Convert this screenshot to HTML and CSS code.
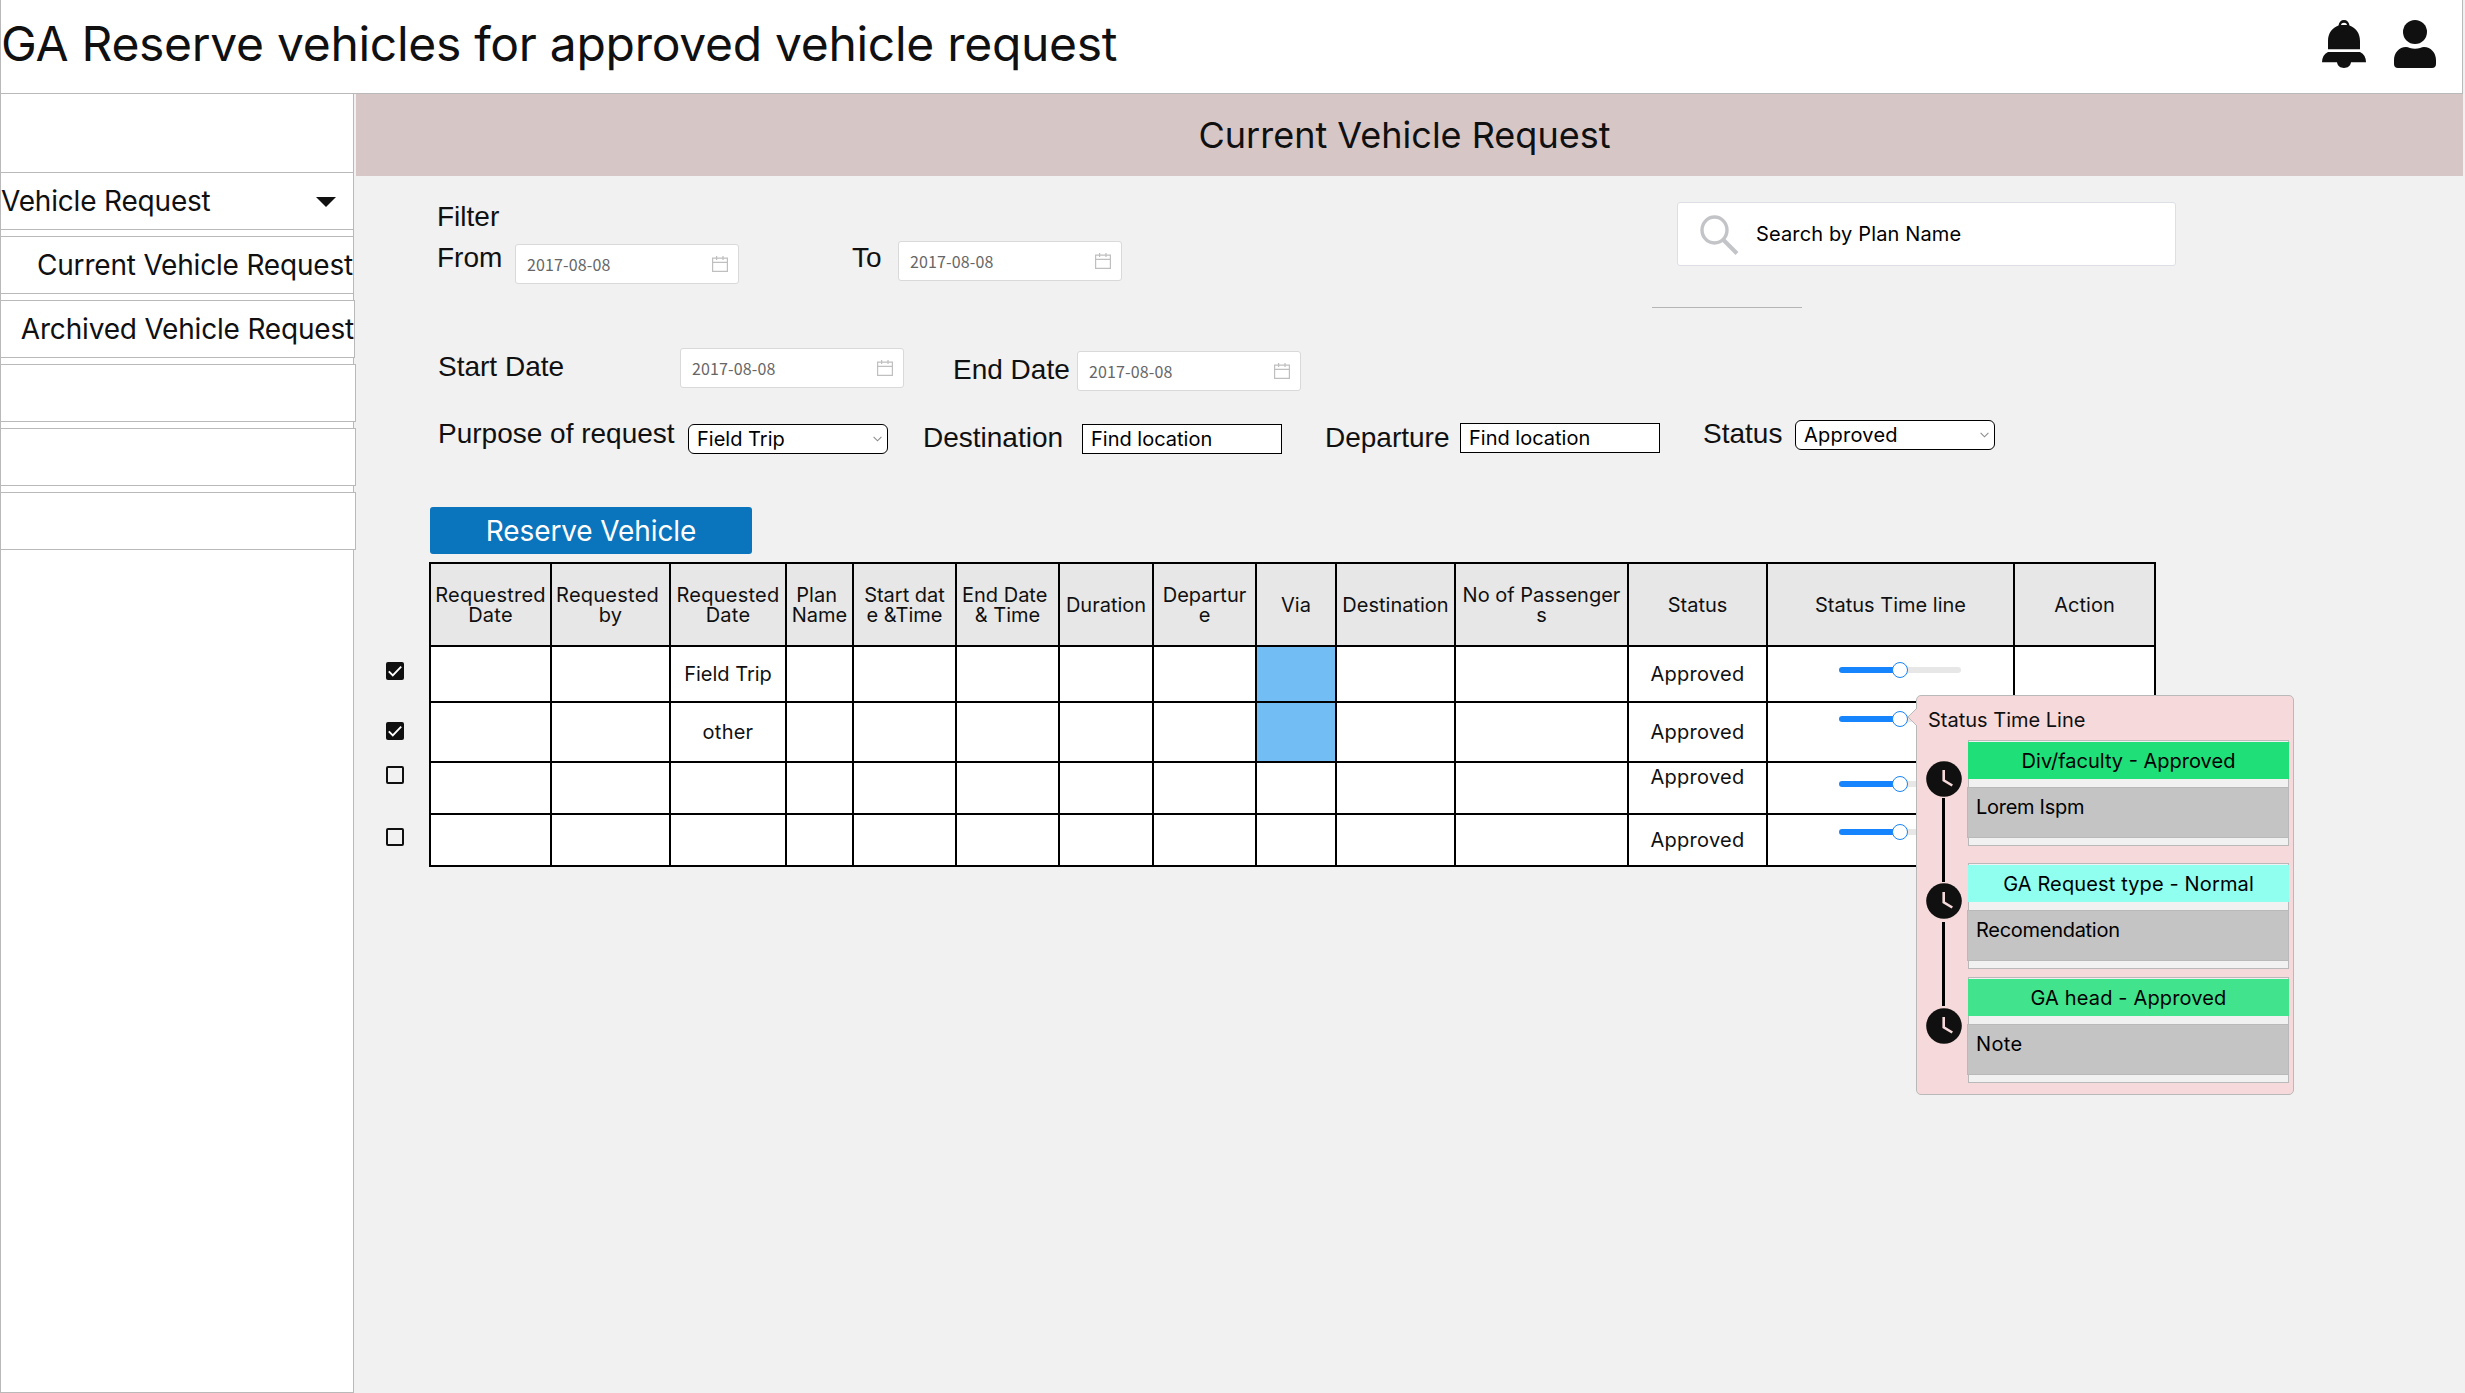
FILE: index.html
```html
<!DOCTYPE html>
<html lang="en">
<head>
<meta charset="utf-8">
<title>GA Reserve vehicles</title>
<link rel="stylesheet" href="styles.css">
</head>
<body>
<svg class="defs" width="0" height="0" aria-hidden="true">
  <symbol id="calendar" viewBox="0 0 16 16"><path d="M.6 2.2h14.8v13.2H.6zM.6 6.3h14.8M4.6 0v4M11 0v4" fill="none" stroke="#bfbfbf" stroke-width="1.2"/></symbol>
  <symbol id="chevron" viewBox="0 0 9 6"><path d="M.6.8l3.9 4 3.9-4" fill="none" stroke="#8c8c8c" stroke-width="1.1"/></symbol>
  <symbol id="clock" viewBox="0 0 36 36"><circle cx="18" cy="18" r="17.8" fill="#101010"/><path d="M17.7 9v10.3l8.6 5.2" fill="none" stroke="#f6d9da" stroke-width="2.6"/></symbol>
  <symbol id="box-on" viewBox="0 0 18 18"><rect width="18" height="18" rx="2" fill="#101010"/><path d="M2.8 9.3l4 4L15.2 4.7" fill="none" stroke="#fff" stroke-width="1.9"/></symbol>
  <symbol id="box-off" viewBox="0 0 18 18"><rect x="1" y="1" width="16" height="16" rx="1" fill="none" stroke="#101010" stroke-width="2"/></symbol>
</svg>

<header class="topbar">
  <h1 class="topbar-title">GA Reserve vehicles for approved vehicle request</h1>
  <svg class="bell" width="44" height="48" viewBox="0 0 44 48" fill="#101010"><path fill-rule="evenodd" d="M6 29.300V21C6 13 10.500 7.500 16.500 5.500C17 2 19 0 22 0s5 2 5.500 5.500C33.500 7.500 38 13 38 21v8.300zM19 5h6c-.3-1.500-1.400-2.300-3-2.300S19.300 3.500 19 5z"/><path d="M6 32h32c4 2 6 5.500 6 10.300H29C28.500 46 25.500 48 22 48s-6.500-2-7-5.700H0C0 37.500 2 34 6 32z"/></svg>
  <svg width="42" height="48" viewBox="0 0 42 48" fill="#101010"><circle cx="21" cy="12" r="12"/><path d="M12 27c2.500 0 5 1.800 9 1.800S27.500 27 30 27c7 0 12 6 12 13v4c0 2.500-1.500 4-4 4H4c-2.500 0-4-1.500-4-4v-4c0-7 5-13 12-13z"/></svg>
</header>

<div class="shell">
  <nav class="sidebar">
    <div class="nav-item nav-group">Vehicle Request<svg width="20" height="10" viewBox="0 0 20 10"><path d="M0 0h20L10 10z" fill="#101010"/></svg></div>
    <div class="nav-item nav-current">Current Vehicle Request</div>
    <div class="nav-item nav-archived">Archived Vehicle Request</div>
    <div class="nav-item nav-empty"></div>
    <div class="nav-item nav-empty"></div>
    <div class="nav-item nav-empty"></div>
  </nav>

  <main class="main">
    <h2 class="banner">Current Vehicle Request</h2>

    <section class="filters">
      <div class="filters-top">
        <div class="range">
          <div class="label label-filter">Filter</div>
          <div class="row row-range">
            <span class="label label-from">From</span>
            <span class="date date-from">2017-08-08<svg width="16" height="16"><use href="#calendar"/></svg></span>
            <span class="label label-to">To</span>
            <span class="date">2017-08-08<svg width="16" height="16"><use href="#calendar"/></svg></span>
          </div>
        </div>
        <div class="search-side">
          <div class="search">
            <svg width="39" height="40" viewBox="0 0 39 40" fill="none" stroke="#c3c4c8"><ellipse cx="14.500" cy="15" rx="12.500" ry="13" stroke-width="3.400"/><path d="M23.500 25L37 38.500" stroke-width="4"/></svg>
            Search by Plan Name
          </div>
          <div class="rule"></div>
        </div>
      </div>
      <div class="row row-dates">
        <span class="label label-start">Start Date</span>
        <span class="date">2017-08-08<svg width="16" height="16"><use href="#calendar"/></svg></span>
        <span class="label label-end">End Date</span>
        <span class="date date-end">2017-08-08<svg width="16" height="16"><use href="#calendar"/></svg></span>
      </div>
      <div class="row row-fields">
        <span class="label label-purpose">Purpose of request</span>
        <span class="field select field-purpose">Field Trip<svg width="9" height="6"><use href="#chevron"/></svg></span>
        <span class="label label-destination">Destination</span>
        <span class="field field-destination">Find location</span>
        <span class="label label-departure">Departure</span>
        <span class="field field-departure">Find location</span>
        <span class="label label-status">Status</span>
        <span class="field select field-status">Approved<svg width="9" height="6"><use href="#chevron"/></svg></span>
      </div>
    </section>

    <div class="reserve">Reserve Vehicle</div>

    <section class="requests">
      <div class="checks">
        <svg width="18" height="18"><use href="#box-on"/></svg>
        <svg class="check-2" width="18" height="18"><use href="#box-on"/></svg>
        <svg class="check-3" width="18" height="18"><use href="#box-off"/></svg>
        <svg class="check-4" width="18" height="18"><use href="#box-off"/></svg>
      </div>
      <table class="grid">
        <colgroup><col class="c1"><col class="c2"><col class="c3"><col class="c4"><col class="c5"><col class="c6"><col class="c7"><col class="c8"><col class="c9"><col class="c10"><col class="c11"><col class="c12"><col class="c13"><col class="c14"></colgroup>
        <thead>
          <tr><th class="wide">Requestred<br>Date</th><th class="wide">Requested&nbsp;<br>by</th><th class="wide">Requested<br>Date</th><th>Plan&nbsp;<br>Name</th><th>Start dat<br>e &amp;Time</th><th>End Date&nbsp;<br>&amp; Time</th><th>Duration</th><th>Departur<br>e</th><th>Via</th><th>Destination</th><th>No of Passenger<br>s</th><th>Status</th><th>Status Time line</th><th>Action</th></tr>
        </thead>
        <tbody>
          <tr class="r1"><td></td><td></td><td>Field Trip</td><td></td><td></td><td></td><td></td><td></td><td class="via"></td><td></td><td></td><td class="wide">Approved</td><td class="timeline"><div class="slider"><i></i></div></td><td></td></tr>
          <tr class="r2"><td></td><td></td><td class="wide">other</td><td></td><td></td><td></td><td></td><td></td><td class="via"></td><td></td><td></td><td class="wide">Approved</td><td class="timeline"><div class="slider"><i></i></div></td><td></td></tr>
          <tr class="r3"><td></td><td></td><td></td><td></td><td></td><td></td><td></td><td></td><td></td><td></td><td></td><td class="wide">Approved</td><td class="timeline"><div class="slider"><i></i></div></td><td></td></tr>
          <tr class="r4"><td></td><td></td><td></td><td></td><td></td><td></td><td></td><td></td><td></td><td></td><td></td><td class="wide">Approved</td><td class="timeline"><div class="slider"><i></i></div></td><td></td></tr>
        </tbody>
      </table>
    </section>
  </main>
</div>

<aside class="popover">
  <svg class="pointer" width="10" height="18" viewBox="0 0 10 18"><path d="M10 0L1 9l9 9" fill="#f6d9da" stroke="#b9b9b9"/></svg>
  <div class="popover-title">Status Time Line</div>
  <div class="popover-body">
    <div class="track">
      <svg width="36" height="36"><use href="#clock"/></svg>
      <span class="link"></span>
      <svg class="clock-2" width="36" height="36"><use href="#clock"/></svg>
      <span class="link link-2"></span>
      <svg class="clock-3" width="36" height="36"><use href="#clock"/></svg>
    </div>
    <div class="cards">
      <div class="card"><div class="card-head green">Div/faculty - Approved</div><div class="card-note tight">Lorem Ispm</div></div>
      <div class="card card-2"><div class="card-head aqua">GA Request type - Normal</div><div class="card-note tight">Recomendation</div></div>
      <div class="card card-3"><div class="card-head mint">GA head - Approved</div><div class="card-note loose">Note</div></div>
    </div>
  </div>
</aside>
</body>
</html>
```
FILE: styles.css
```css
* { box-sizing: border-box; }

body {
  margin: 0;
  width: 2465px;
  height: 1393px;
  overflow: hidden;
  background: #f1f1f1;
  color: #101010;
  font: 20px/20px Inter, sans-serif;
}

svg { display: block; flex: none; }
.defs { position: absolute; }

/* Top bar */
.topbar {
  display: flex;
  width: 2463px;
  height: 94px;
  padding: 20px 26px 0 0;
  background: #fff;
  border: solid #b9b9b9;
  border-width: 0 1px 1px;
}
.topbar-title {
  flex: 1;
  margin: 0;
  font-size: 48px;
  font-weight: 400;
  line-height: 47px;
  letter-spacing: -.29px;
}
.bell { margin-right: 28px; }

/* Layout */
.shell { display: flex; height: 1299px; }

.sidebar {
  width: 354px;
  flex: none;
  display: flex;
  flex-direction: column;
  gap: 6px;
  padding-top: 78px;
  background: #fff;
  border: solid #b9b9b9;
  border-width: 0 1px 1px;
}
.nav-item {
  flex: none;
  width: 354px;
  height: 58px;
  margin-left: -1px;
  display: flex;
  align-items: center;
  background: #fff;
  border: 1px solid #b9b9b9;
  font-size: 28px;
  letter-spacing: -.19px;
  white-space: nowrap;
}
.nav-group { justify-content: space-between; padding-right: 17px; }
.nav-group svg { margin-top: 2px; }
.nav-current { justify-content: flex-end; }
.nav-archived { width: 355px; justify-content: flex-end; }
.nav-empty { width: 356px; }

.main { flex: none; width: 2109px; }

.banner {
  display: flex;
  align-items: center;
  justify-content: center;
  height: 82px;
  margin: 0 0 0 2px;
  padding-right: 10px;
  background: #d6c6c6;
  font-size: 36px;
  font-weight: 400;
}

/* Filters */
.filters { height: 331px; padding: 24px 0 0 82px; }
.filters-top { display: flex; height: 148px; }
.range { width: 1216px; }
.row { display: flex; align-items: flex-start; }
.label {
  flex: none;
  font: 28px/34px "Liberation Sans", Arial, sans-serif;
  white-space: nowrap;
}
.label-filter { padding-left: 1px; }
.row-range { margin-top: 7px; }
.label-from { width: 79px; padding-left: 1px; }
.date-from { margin-top: 3px; }
.label-to { width: 46px; margin-left: 113px; }

.date {
  flex: none;
  display: flex;
  align-items: center;
  justify-content: space-between;
  width: 224px;
  height: 40px;
  padding: 0 10px 0 11px;
  background: #fff;
  border: 1px solid #d9d9d9;
  border-radius: 3px;
  color: #666;
  font: 16px/24px "Noto Sans CJK SC", sans-serif;
  letter-spacing: .13px;
}

.search-side { width: 524px; }
.search {
  display: flex;
  align-items: center;
  width: 499px;
  height: 64px;
  margin: 2px 0 0 25px;
  padding-left: 22px;
  background: #fff;
  border: 1px solid #dce0e6;
  border-radius: 3px;
  color: #000;
  letter-spacing: .15px;
}
.search svg { margin: 1px 17px 0 0; }
.rule { width: 150px; height: 1px; margin-top: 41px; background: #b5b5b5; }

.row-dates { height: 69px; }
.label-start { width: 242px; margin: 2px 0 0 2px; }
.label-end { width: 124px; margin: 5px 0 0 49px; }
.date-end { margin-top: 3px; }

.label-purpose { width: 250px; margin-left: 2px; }
.label-destination { width: 159px; margin: 4px 0 0 35px; }
.label-departure { width: 135px; margin: 4px 0 0 43px; }
.label-status { width: 92px; margin-left: 43px; }
.field {
  flex: none;
  display: flex;
  align-items: center;
  width: 200px;
  height: 30px;
  padding: 0 5px 0 8px;
  background: #fff;
  border: 1px solid #000;
  color: #000;
}
.select { justify-content: space-between; border-radius: 6px; }
.field-purpose, .field-destination { margin-top: 7px; }
.field-departure { margin-top: 6px; }
.field-status { margin-top: 3px; letter-spacing: .25px; }

/* Requests */
.reserve {
  display: flex;
  align-items: center;
  justify-content: center;
  width: 322px;
  height: 47px;
  margin-left: 76px;
  border-radius: 3px;
  background: #0a74bd;
  color: #fff;
  font-size: 28px;
  letter-spacing: -.12px;
}
.requests { display: flex; align-items: flex-start; margin-top: 8px; }
.checks { width: 43px; margin: 100px 0 0 32px; }
.check-2 { margin-top: 42px; }
.check-3 { margin-top: 26px; }
.check-4 { margin-top: 44px; }

.grid {
  width: 1727px;
  height: 305px;
  table-layout: fixed;
  border-collapse: separate;
  border-spacing: 2px;
  background: #000;
}
th, td { padding: 0; text-align: center; vertical-align: middle; white-space: nowrap; }
th { height: 81px; background: #e7e7e7; font-weight: 400; }
td { background: #fff; }
.wide { letter-spacing: .25px; }
.c1 { width: 119px; } .c2 { width: 117px; } .c3 { width: 114px; }
.c4 { width: 65px; } .c5 { width: 101px; } .c6 { width: 101px; }
.c7 { width: 92px; } .c8 { width: 101px; } .c9 { width: 78px; }
.c10 { width: 117px; } .c11 { width: 171px; } .c12 { width: 137px; }
.c13 { width: 245px; } .c14 { width: 139px; }
.r1 td { height: 54px; }
.r2 td { height: 58px; }
.r3 td, .r4 td { height: 50px; }
.r3 td { vertical-align: top; padding-top: 4px; }
.grid .via { background: #72bef4; }
.grid .timeline { vertical-align: top; }

.slider {
  display: flex;
  align-items: center;
  justify-content: center;
  width: 122px;
  height: 6px;
  margin-left: 71px;
  border-radius: 3px;
  background: linear-gradient(90deg, #1684fc 50%, #e7e7e7 50%);
}
.slider i {
  flex: none;
  width: 16px;
  height: 16px;
  border: 1px solid #1684fc;
  border-radius: 50%;
  background: #fff;
}
.r1 .timeline { padding-top: 20px; }
.r2 .timeline { padding-top: 13px; }
.r3 .timeline { padding-top: 18px; }
.r4 .timeline { padding-top: 14px; }

/* Status popover, over the table */
.popover {
  position: absolute;
  left: 1916px;
  top: 695px;
  width: 378px;
  height: 400px;
  border: 1px solid #b9b9b9;
  border-radius: 5px;
  background: #f6d9da;
}
.pointer { position: absolute; left: -10px; top: 12px; }
.popover-title { padding: 14px 0 0 11px; }
.popover-body { display: flex; margin-top: 10px; }
.track {
  display: flex;
  flex-direction: column;
  align-items: center;
  width: 36px;
  margin: 21px 0 0 9px;
}
.link { width: 3px; height: 84px; margin: 1px 1px 0 0; background: #000; }
.clock-2 { margin-top: 1px; }
.link-2 { margin-top: 3px; }
.clock-3 { margin-top: 2px; }
.cards { margin-left: 6px; }
.card {
  width: 321px;
  height: 106px;
  padding-top: 1px;
  background: #f1f1f1;
  border: 1px solid #b9b9b9;
  color: #000;
}
.card-2 { margin-top: 17px; }
.card-3 { margin-top: 8px; }
.card-head {
  display: flex;
  align-items: center;
  justify-content: center;
  height: 37px;
  margin: 0 -1px;
}
.green { background: #1edf78; }
.aqua { background: #90ffef; letter-spacing: .13px; }
.mint { background: #42e38d; letter-spacing: .15px; }
.card-note {
  height: 51px;
  margin: 8px -1px 0 -2px;
  padding: 9px 0 0 8px;
  background: #c4c4c4;
  border: 1px solid #b9b9b9;
}
.tight { letter-spacing: -.28px; }
.loose { letter-spacing: .4px; }
```
